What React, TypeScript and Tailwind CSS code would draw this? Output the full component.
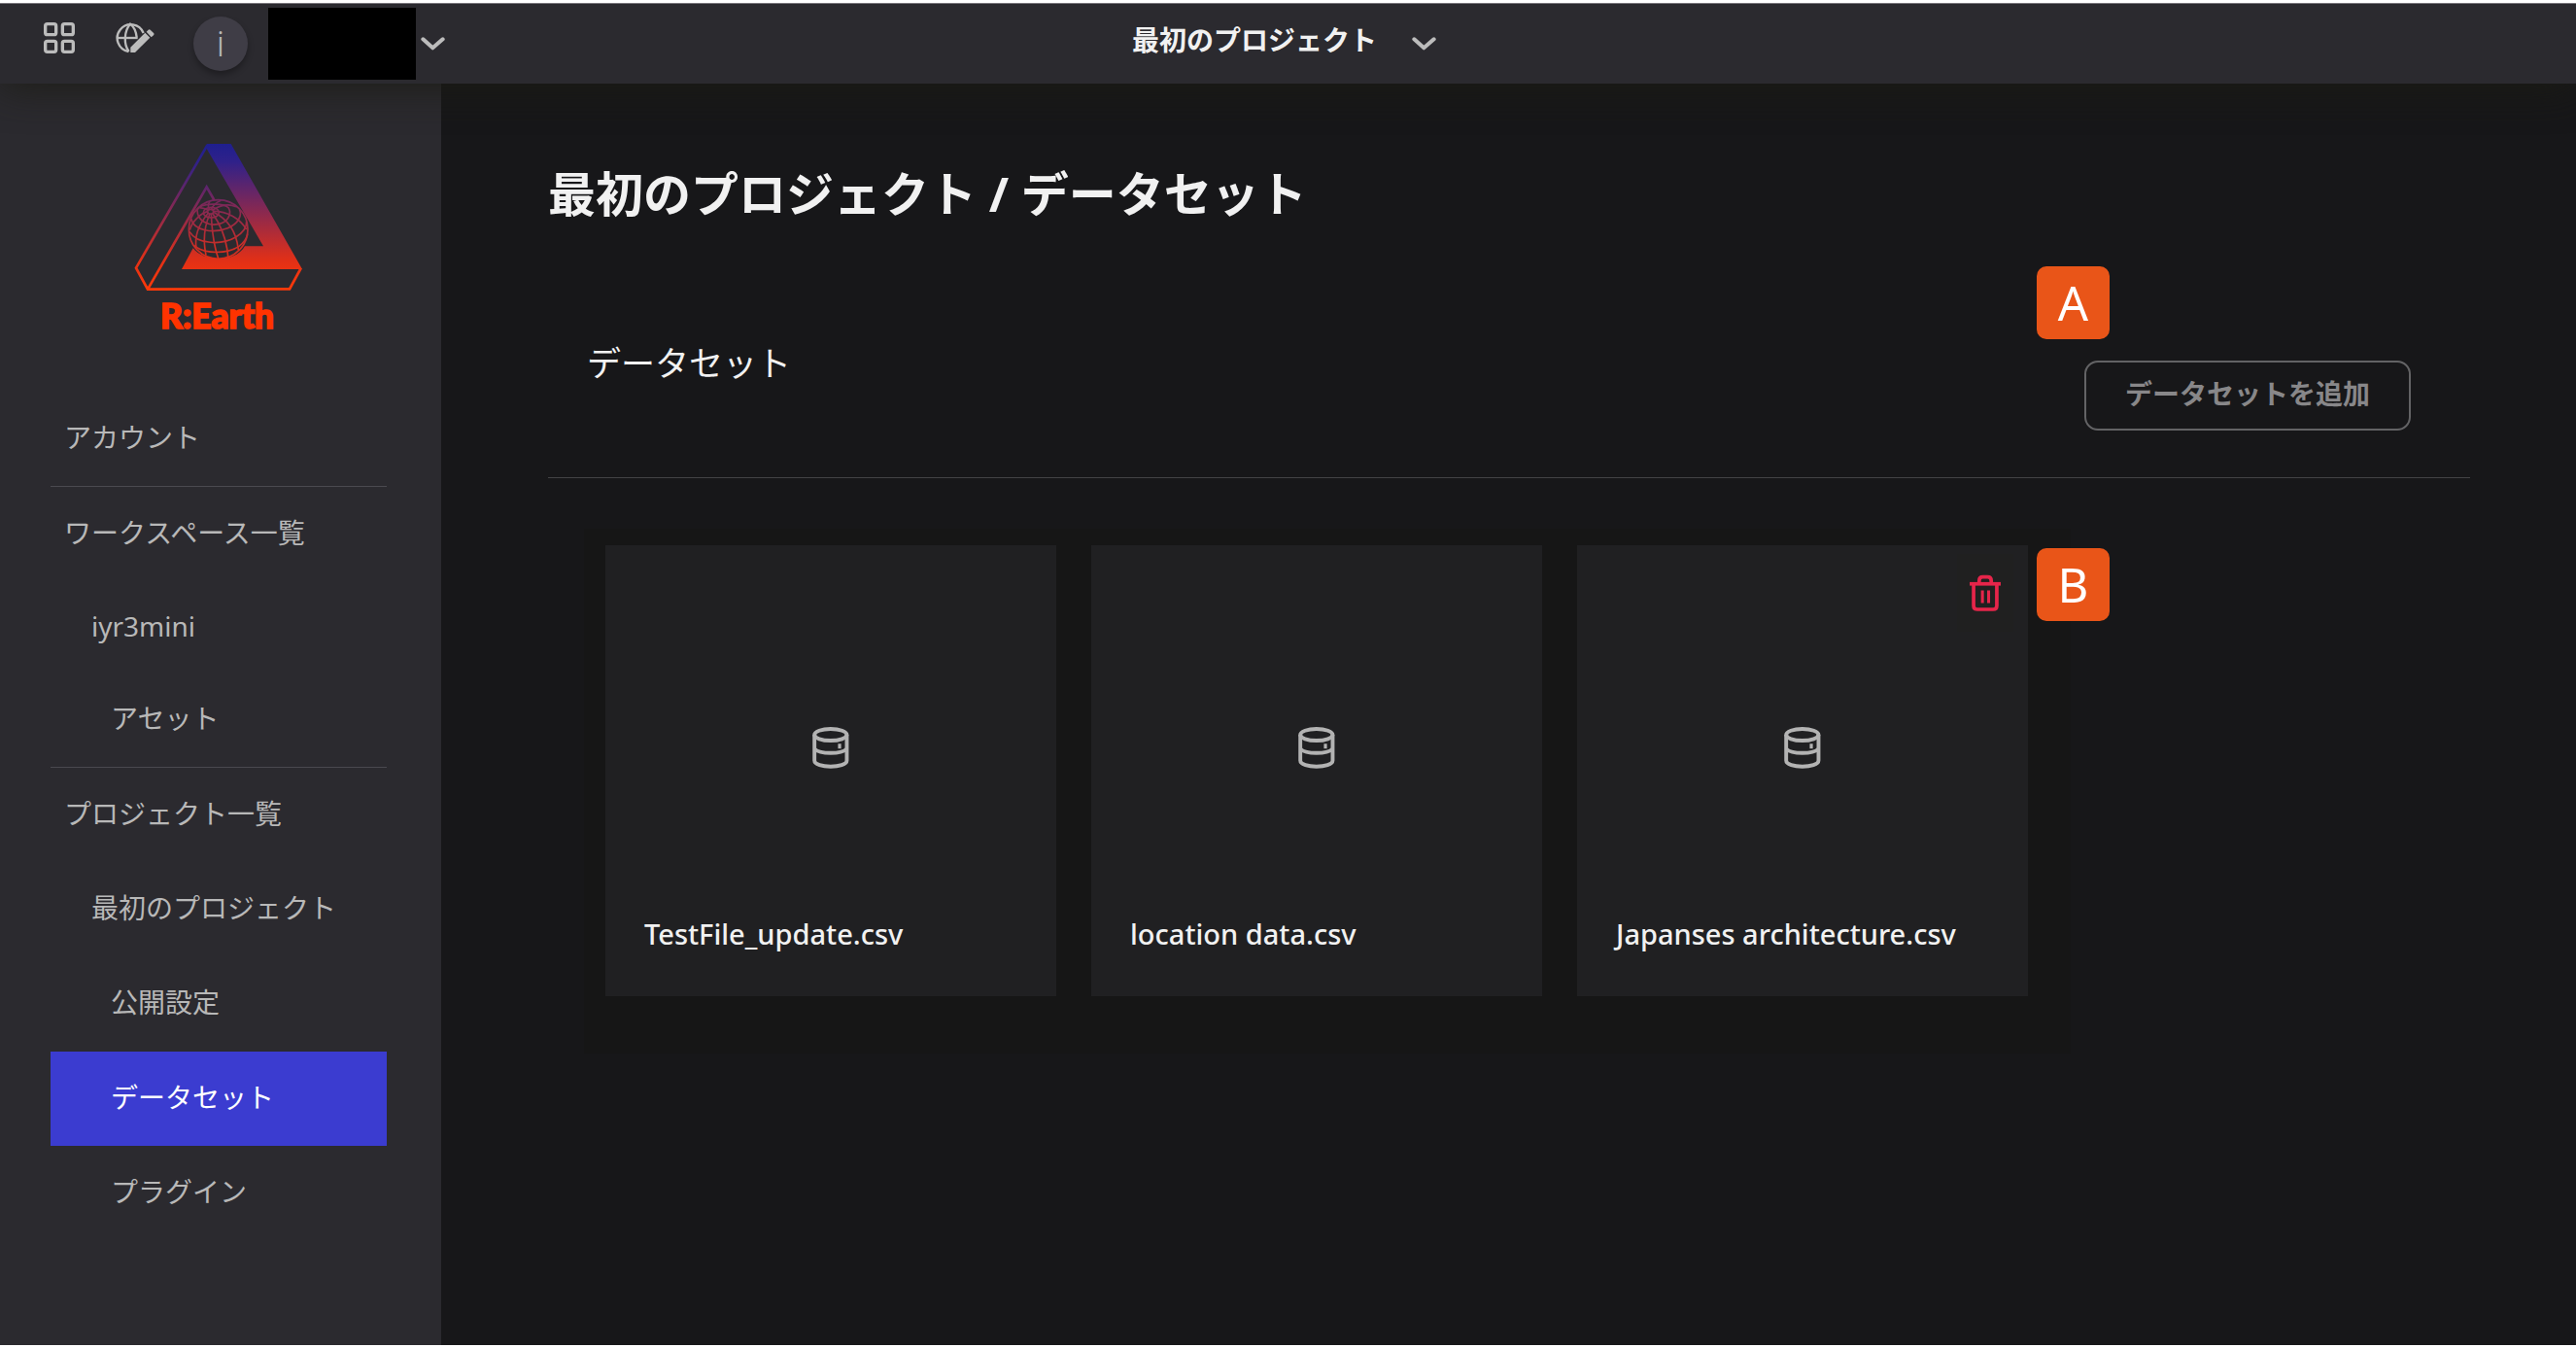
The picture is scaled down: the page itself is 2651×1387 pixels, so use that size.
import React from "react";

function GridIcon() {
  return (
    <svg viewBox="0 0 96 96" className="size-8" fill="none" stroke="#bcbcbc" strokeWidth="10">
      <rect x="5" y="5" width="33" height="33" rx="6" />
      <rect x="58" y="5" width="33" height="33" rx="6" />
      <rect x="5" y="58" width="33" height="33" rx="6" />
      <rect x="58" y="58" width="33" height="33" rx="6" />
    </svg>
  );
}

function GlobePencilIcon() {
  return (
    <svg viewBox="0 0 120 96" className="h-8 w-10" fill="none" stroke="#bcbcbc" strokeWidth="7">
      <path d="M40 90 A42 42 0 1 1 86 33" />
      <path d="M41 90 C24 68 26 26 45 5 C57 14 63 28 65 46" />
      <path d="M4 48 H68" />
      <path d="M46 93 L46 77 L91 32 L106 47 L60 93 Z" fill="#bcbcbc" stroke="none" />
      <path d="M95 29 L101 23 Q104 20 107 23 L118 34 Q120 37 117 40 L110 46 Z" fill="#bcbcbc" stroke="none" />
    </svg>
  );
}

function ChevronIcon() {
  return (
    <svg viewBox="0 0 75 42" className="h-[14px] w-[25px] shrink-0" fill="none" stroke="#bcbcbc" strokeWidth="12" strokeLinecap="round" strokeLinejoin="round">
      <path d="M7 7 L37 34 L68 7" />
    </svg>
  );
}

function DatabaseIcon() {
  return (
    <svg viewBox="686 606 113 126" className="h-[45px] w-10" fill="none" stroke="#b3b3b3" strokeWidth="11">
      <ellipse cx="742" cy="631" rx="47" ry="17" />
      <path d="M695 631 V706 C695 729 789 729 789 706 V631" />
      <path d="M695 672 C712 688 772 688 789 672" />
      <path d="M768 657 V671" strokeWidth="9" />
    </svg>
  );
}

function TrashIcon() {
  return (
    <svg viewBox="139 123 101 116" className="h-[39px] w-[34px]" fill="none" stroke="#e6254a" strokeWidth="11">
      <path d="M142 152 H237" />
      <path d="M171 150 V143 Q171 131 182 131 H197 Q208 131 208 143 V150" />
      <path d="M154 154 V219 Q154 230 165 230 H214 Q225 230 225 219 V154" />
      <path d="M181 172 V211 M200 172 V211" strokeWidth="9" />
    </svg>
  );
}

function Logo() {
  return (
    <svg viewBox="110 45 534 630" className="mx-auto h-[210px] w-[178px]" role="img" aria-label="R:Earth">
      <defs>
        <linearGradient id="brand" gradientUnits="userSpaceOnUse" x1="0" y1="54" x2="0" y2="508">
          <stop offset="0" stopColor="#1f1f8e" />
          <stop offset="0.12" stopColor="#2f218a" />
          <stop offset="0.8" stopColor="#e33016" />
          <stop offset="1" stopColor="#ff3a08" />
        </linearGradient>
      </defs>
      <path fill="url(#brand)" d="M340 54 H415 L635 441 H263 L298 376 C330 418 425 424 458 370 H515 L340 69 Z" />
      <g fill="none" stroke="url(#brand)" strokeWidth="8">
        <path d="M342 58 L122 437 L158 503 L596 502 L631 438" />
        <path d="M158 503 L340 187 L366 232" />
      </g>
      <g fill="none" stroke="url(#brand)" strokeWidth="5">
        <circle cx="376" cy="318" r="91" fill="#2b2a2f" />
        <ellipse cx="352" cy="263" rx="9" ry="7" />
        <ellipse cx="354" cy="266" rx="24" ry="16" />
        <path d="M311 258 C311 292 345 308 375 302 C405 296 418 272 408 252 C394 235 318 236 311 258" />
        <path d="M292 285 C300 322 360 332 405 314 C440 300 450 272 441 256" />
        <path d="M287 325 C310 364 385 368 430 342 C455 326 464 310 463 294" />
        <path d="M301 368 C335 396 405 394 440 370 C456 358 464 344 466 332" />
        <path d="M343 263 C322 268 294 294 288 320" />
        <path d="M345 268 C318 300 302 340 308 376" />
        <path d="M350 270 C332 310 328 350 338 398" />
        <path d="M354 270 C356 318 362 368 376 408" />
        <path d="M358 268 C380 300 402 350 406 402" />
        <path d="M361 265 C400 284 432 322 438 382" />
        <path d="M361 262 C405 262 442 284 463 318" />
        <path d="M359 258 C385 242 412 240 431 248" />
        <path d="M354 256 C360 244 372 234 384 229 M348 256 C344 248 344 240 350 232 M344 259 C332 252 326 250 318 252" />
      </g>
      <text x="197" y="624" fontSize="106" fontWeight="900" fill="#ff3300" stroke="#ff3300" strokeWidth="5" fontFamily="Lato, sans-serif">
        R:Earth
      </text>
    </svg>
  );
}

type NavItem = { label: string; indent: string; height: string; divider?: boolean; active?: boolean };

const navItems: NavItem[] = [
  { label: "アカウント", indent: "pl-3.5", height: "h-[98px]", divider: true },
  { label: "ワークスペース一覧", indent: "pl-3.5", height: "h-[97px]" },
  { label: "iyr3mini", indent: "pl-[42px]", height: "h-[95px]" },
  { label: "アセット", indent: "pl-[62px]", height: "h-[97px]", divider: true },
  { label: "プロジェクト一覧", indent: "pl-3.5", height: "h-[97px]" },
  { label: "最初のプロジェクト", indent: "pl-[42px]", height: "h-[97px]" },
  { label: "公開設定", indent: "pl-[62px]", height: "h-[98px]" },
  { label: "データセット", indent: "pl-[62px]", height: "h-[97px]", active: true },
  { label: "プラグイン", indent: "pl-[62px]", height: "h-[97px]" },
];

const datasets = [
  { name: "TestFile_update.csv" },
  { name: "location data.csv" },
  { name: "Japanses architecture.csv", removable: true },
];

function Marker({ children, className }: { children: string; className: string }) {
  return (
    <span className={`absolute flex size-[75px] items-center justify-center rounded-[10px] bg-[#e95518] text-[49px] leading-none text-white ${className}`}>
      {children}
    </span>
  );
}

export default function App() {
  return (
    <div className="flex min-h-screen flex-col border-y-[3px] border-white bg-[#171719] font-['Noto_Sans','Noto_Sans_CJK_JP',sans-serif] text-[28px] text-[#b8b8b8]">
      <header className="relative z-10 grid h-[83px] grid-cols-[1fr_auto_1fr] items-center border-t border-[#77757a] bg-[#2b2a2f] shadow-[0_4px_40px_rgba(28,28,20,0.9)] [clip-path:inset(0_0_-60px_0)]">
        <div className="flex items-center pl-[45px]">
          <div className="flex items-center gap-[42px] pb-3">
            <button aria-label="ダッシュボード"><GridIcon /></button>
            <button aria-label="地球儀を編集"><GlobePencilIcon /></button>
          </div>
          <span className="ml-10 flex size-14 items-center justify-center rounded-full bg-[#3f3d46] text-[36px] leading-none font-light shadow-[0_4px_6px_rgba(0,0,0,0.3)]">
            i
          </span>
          <div className="ml-[21px] h-[74px] w-[152px] bg-black" />
          <button aria-label="ワークスペースメニュー" className="ml-[5px]"><ChevronIcon /></button>
        </div>
        <button className="flex items-center gap-9 pr-2 leading-10 font-bold text-[#f1f1f1]">
          <span className="pb-2">最初のプロジェクト</span>
          <ChevronIcon />
        </button>
      </header>
      <div className="flex flex-1">
        <aside className="w-[454px] shrink-0 bg-[#2b2a2f] pt-[59px] pr-14 pl-[52px]">
          <Logo />
          <nav className="mt-12">
            {navItems.map((item) => (
              <a
                key={item.label}
                href="#"
                className={`flex items-center pb-1 ${item.height} ${item.indent} ${item.active ? "bg-[#3b3cd0] text-white" : ""} ${item.divider ? "border-b border-[#4a494f]" : ""}`}
              >
                {item.label}
              </a>
            ))}
          </nav>
        </aside>
        <main className="min-w-0 flex-1 pt-[83px] pr-[109px] pl-[110px]">
          <h1 className="text-[49px] leading-[60px] font-bold text-[#f1f1f1]">最初のプロジェクト / データセット</h1>
          <div className="mt-[121px] flex items-start justify-between border-b border-[#434345] pr-[61px] pb-12 pl-10">
            <h2 className="text-[35px] leading-[48px] text-[#f1f1f1]">データセット</h2>
            <div className="relative mt-[21px]">
              <button className="flex h-[72px] items-center rounded-[14px] border-2 border-[#636365] px-10 pb-1 font-bold text-[#888789]">
                データセットを追加
              </button>
              <Marker className="-top-[97px] -left-[49px]">A</Marker>
            </div>
          </div>
          <ul className="mt-[52px] ml-[37px] grid max-w-[1530px] grid-cols-3 gap-9 bg-[#161616] pt-[17px] pr-11 pb-[59px] pl-[22px]">
            {datasets.map((d) => (
              <li key={d.name} className="relative flex aspect-square flex-col justify-end bg-[#202022]">
                <div className="absolute inset-0 flex items-center justify-center pb-12">
                  <DatabaseIcon />
                </div>
                <p className="px-10 pb-[42px] text-[29px] leading-[44px] font-medium text-[#f1f1f1]">{d.name}</p>
                {d.removable && (
                  <>
                    <button aria-label="削除" className="absolute top-[9px] right-[15px] flex h-20 w-[58px] items-center justify-center bg-[#202020]">
                      <TrashIcon />
                    </button>
                    <Marker className="top-[3px] -right-[84px]">B</Marker>
                  </>
                )}
              </li>
            ))}
          </ul>
        </main>
      </div>
    </div>
  );
}
